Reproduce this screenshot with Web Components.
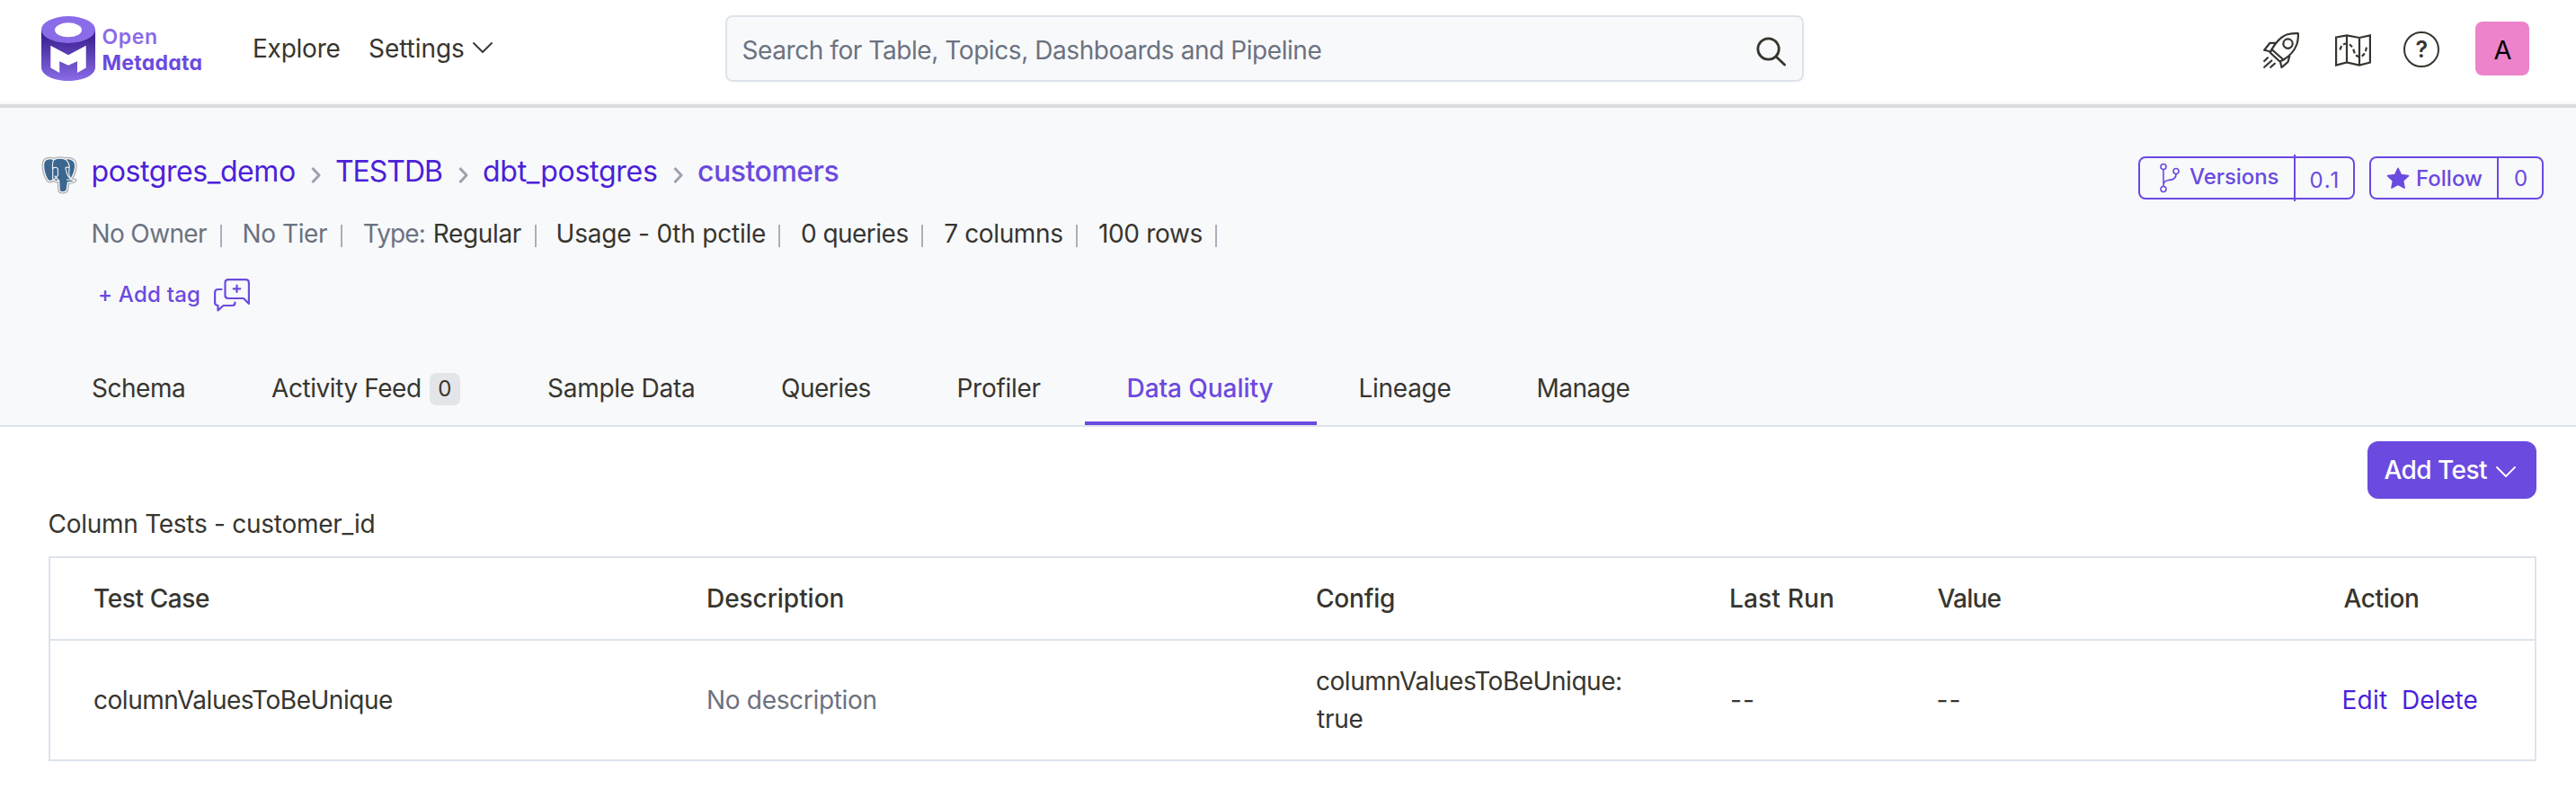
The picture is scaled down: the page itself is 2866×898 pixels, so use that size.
<!DOCTYPE html>
<html lang="en">
<head>
<meta charset="utf-8">
<title>OpenMetadata</title>
<style>
  html, body { margin: 0; background: #fff; }
  body {
    font-family: Inter, "Liberation Sans", sans-serif;
    font-size: 28px; line-height: 1; color: #37352f;
    --primary: #6b4adf; --link: #4c1fd9; --muted: #6b7280; --line: #dde3ec; --soft: #f8f9fb;
  }
</style>
</head>
<body>
<om-app></om-app>
<script>
const define = (name, html, setup) => {
  const tpl = document.createElement('template');
  tpl.innerHTML = html;
  customElements.define(name, class extends HTMLElement {
    connectedCallback() {
      if (this.shadowRoot) return;
      this.attachShadow({ mode: 'open' }).append(tpl.content.cloneNode(true));
      if (setup) setup.call(this, this.shadowRoot);
    }
  });
};

/* A single line of text whose tracking adapts to the width in its "w" attribute. */
const ctx = document.createElement('canvas').getContext('2d');
define('om-text', `
  <style>
    :host { display: block; flex: none; white-space: nowrap; line-height: 1; }
    span { display: block; }
  </style>
  <span><slot></slot></span>`, function (root) {
  const w = parseFloat(this.getAttribute('w'));
  const text = this.textContent;
  const cs = getComputedStyle(this);
  ctx.font = `${cs.fontWeight} ${cs.fontSize} ${cs.fontFamily}`;
  const m = ctx.measureText(text);
  const ink = m.actualBoundingBoxLeft + m.actualBoundingBoxRight;
  const span = root.querySelector('span');
  this.style.width = w + 'px';
  span.style.marginLeft = m.actualBoundingBoxLeft + 'px';
  if (text.length > 1) span.style.letterSpacing = ((w - ink) / (text.length - 1)).toFixed(3) + 'px';
});

define('om-chevron', `
  <style>:host { display: block; flex: none; } svg { display: block; }</style>
  <svg width="22" height="12" viewBox="0 0 22 12" fill="none" stroke="currentColor" stroke-width="1.8" stroke-linecap="round" stroke-linejoin="round"><path d="M1 1l10 10L21 1"/></svg>`);

define('om-logo', `
  <style>
    :host { display: flex; align-items: center; gap: 8.500px; width: 178px; flex: none; font-size: 23px; }
    svg { display: block; flex: none; }
    .words { display: flex; flex-direction: column; gap: 6px; font-feature-settings: "cv11"; margin-top: 3px; }
    .o { color: #8a6be8; font-weight: 600; } .m { color: var(--primary); font-weight: 700; }
  </style>
  <svg width="60" height="72" viewBox="0 0 60 72">
    <defs><linearGradient id="g" x1="0" y1="17" x2="0" y2="72" gradientUnits="userSpaceOnUse"><stop offset="0" stop-color="#351a8a"/><stop offset="1" stop-color="#8a6be8"/></linearGradient></defs>
    <path d="M0 15V57C0 65.500 13.500 72 30 72S60 65.500 60 57V15z" fill="url(#g)"/>
    <ellipse cx="30" cy="15" rx="30" ry="15" fill="#8a6be8"/>
    <ellipse cx="30" cy="15.300" rx="15" ry="8" fill="#fff"/>
    <path d="M10.300 32.700L30 43.300 49.700 32.700V57.500L40 63V50.300L30 54.700 20.200 50.300V63L10.300 57.500z" fill="#fff"/>
  </svg>
  <div class="words"><om-text class="o" w="59.500">Open</om-text><om-text class="m" w="106.500">Metadata</om-text></div>`);

define('om-search', `
  <style>
    :host { display: flex; box-sizing: border-box; width: 1200px; height: 74px; border: 2px solid var(--line); border-radius: 8px;
      background: var(--soft); align-items: center; justify-content: space-between; padding: 0 18px 0 17.500px; color: var(--muted); }
    om-text { margin-top: 4px; }
    svg { display: block; color: #37352f; margin-top: 6px; }
  </style>
  <om-text w="643">Search for Table, Topics, Dashboards and Pipeline</om-text>
  <svg width="33" height="33" viewBox="0 0 33 33" fill="none" stroke="currentColor" stroke-width="2.800" stroke-linecap="round"><circle cx="13.500" cy="13.500" r="11.700"/><path d="M22 22l9.500 9"/></svg>`);

define('om-avatar', `
  <style>:host { display: flex; width: 60px; height: 60px; border-radius: 8px; background: #ec83cb; color: #000; align-items: center; justify-content: center; font-size: 29px; } om-text { margin-top: 3px; }</style>
  <om-text w="19"></om-text>`, function (root) {
  const t = root.querySelector('om-text');
  const fresh = t.cloneNode();
  fresh.textContent = this.textContent;
  t.replaceWith(fresh);
});

define('om-header', `
  <style>
    :host { display: block; height: 116px; background: #fff; border-bottom: 4px solid #dadce0; box-shadow: inset 0 -5px 5px -4px rgba(60,50,40,.08); }
    .bar { display: flex; align-items: center; height: 108px; padding-left: 46px; }
    .explore { margin-left: 59px; } .settings { margin-left: 33.500px; }
    om-chevron { margin-left: 10px; margin-top: -2px; }
    om-search { margin-left: 259px; flex: none; }
    .icons { display: flex; align-items: center; margin-left: 511px; }
    svg { display: block; }
    .map { margin: 4px 36px 0 40px; } .rocket { margin-top: 4px; }
    .help { box-sizing: border-box; width: 40px; height: 40px; border: 2.500px solid #37352f; border-radius: 50%; display: flex; align-items: center; justify-content: center; font-size: 25px; font-weight: 600; margin: 2px 40px 0 0; }
  </style>
  <div class="bar">
    <om-logo></om-logo>
    <om-text class="explore" w="94.500">Explore</om-text>
    <om-text class="settings" w="105">Settings</om-text>
    <om-chevron></om-chevron>
    <om-search></om-search>
    <div class="icons">
      <svg class="rocket" width="40" height="40" viewBox="0 0 40 40" fill="none" stroke="#37352f" stroke-width="2.200" stroke-linejoin="round" stroke-linecap="round">
        <path d="M9.500 19C13 12 20 4.500 27 2.300Q33 .900 38.800 1.200Q39.300 7 37.500 13C35 20 30 26 22.500 30.500z"/>
        <circle cx="27.500" cy="12.600" r="5.200"/>
        <path d="M14 11.800H7.500L1.200 19.800L8.500 21.500M9.500 19L7.700 22.500L18.500 32.500L22.500 30.500M29.300 26.500L27.500 33L20.500 39L19 32.500M1.200 32L5 28.300M1.200 38.800L9.300 31.500M8.300 38.800L12.800 34.700"/>
      </svg>
      <svg class="map" width="40" height="36" viewBox="0 0 40 36" fill="none" stroke="#37352f" stroke-width="2.200">
        <path d="M1.100 3.500L13 1.400 27 4 38.900 1.400V31.500L27 34.500 13 31.500 1.100 34.500zM13 1.200V31.500M27 4V34.500"/>
        <path d="M5.500 17.500Q7 10.500 13 10.500Q18 11 20.500 17.500Q22.500 25 27 25Q33.500 25 35 14" stroke-dasharray="4.500 2.500"/>
      </svg>
      <div class="help"><om-text w="13">?</om-text></div>
      <om-avatar>A</om-avatar>
    </div>
  </div>`);

define('om-breadcrumb', `
  <style>
    :host { display: flex; align-items: center; font-size: 32px; color: var(--link); }
    svg { display: block; flex: none; }
    .pg { margin: 8px 17.500px 0 0; }
    .sep { margin: 8px 17px 0 18px; }
    .cur { color: var(--primary); font-weight: 500; }
  </style>
  <svg class="pg" width="40" height="42" viewBox="0 0 40 42" stroke-linejoin="round" stroke-linecap="round">
    <path d="M14 3.500C9 1.500 3 2.500 2.500 8.500C2.200 14 4 21 6.500 25.500C8 28 11 28 13 26C15 28 17.500 27.500 19.500 27L20 37.500C20.500 40.500 28 40.500 28.500 36.500L29.500 29C32.500 29.200 36 28.500 37.500 26.500C36.500 26.300 34 26.800 33 25.500C36 20 38.500 13 37.500 8C36.500 3 30.500 1.800 26.500 3C22 1.500 17.500 2 14 3.500z" fill="none" stroke="#a3a5a8" stroke-width="3.600"/>
    <path d="M14 3.500C9 1.500 3 2.500 2.500 8.500C2.200 14 4 21 6.500 25.500C8 28 11 28 13 26C15 28 17.500 27.500 19.500 27L20 37.500C20.500 40.500 28 40.500 28.500 36.500L29.500 29C32.500 29.200 36 28.500 37.500 26.500C36.500 26.300 34 26.800 33 25.500C36 20 38.500 13 37.500 8C36.500 3 30.500 1.800 26.500 3C22 1.500 17.500 2 14 3.500z" fill="#3b6690" stroke="#f1f2f3" stroke-width="1.500"/>
    <path d="M14 3.500C11.500 7 12.500 12 12.700 16C13 20 12 24 13 26C17 24 19 22 18.500 19C18 15.500 19.500 13 17 12.500Q14 12 12.700 13.500M15 22L19.500 27M26.500 3C30.500 6 31.500 11 31 15C30 19 31 22 33 25.500C31 27.500 30 25 28.500 26M31 13C29 11.500 26.500 12 27 13.500C28.500 17 27.500 22 33 25.500" fill="none" stroke="#eceef0" stroke-width="1.200"/>
  </svg>
  <om-text w="224.500">postgres_demo</om-text>
  <svg class="sep" width="11" height="18" viewBox="0 0 11 18" fill="none" stroke="#9ca3af" stroke-width="3" stroke-linejoin="round"><path d="M1.500 1l7.500 8-7.500 8"/></svg>
  <om-text w="118">TESTDB</om-text>
  <svg class="sep" width="11" height="18" viewBox="0 0 11 18" fill="none" stroke="#9ca3af" stroke-width="3" stroke-linejoin="round"><path d="M1.500 1l7.500 8-7.500 8"/></svg>
  <om-text w="193">dbt_postgres</om-text>
  <svg class="sep" width="11" height="18" viewBox="0 0 11 18" fill="none" stroke="#9ca3af" stroke-width="3" stroke-linejoin="round"><path d="M1.500 1l7.500 8-7.500 8"/></svg>
  <om-text class="cur" w="155.500">customers</om-text>`);

define('om-actions', `
  <style>
    :host { display: flex; gap: 16px; font-size: 24px; font-weight: 500; color: var(--primary); }
    .btn { display: flex; box-sizing: border-box; height: 48px; border: 2px solid currentColor; border-radius: 8px; align-items: center; }
    .btn i { width: 2px; background: currentColor; align-self: stretch; flex: none; }
    .btn i.tall { margin: -4px 0; }
    .v { width: 241px; } .f { width: 194px; }
    svg { display: block; flex: none; }
    .num { font-weight: 400; }
  </style>
  <div class="btn v">
    <svg style="margin-left:22px" width="22" height="34" viewBox="0 0 22 34" fill="none" stroke="currentColor" stroke-width="1.600"><circle cx="4" cy="4.500" r="3"/><circle cx="4" cy="29.500" r="3"/><circle cx="18" cy="9.500" r="3"/><path d="M4 7.500V26.500M18 12.500C18 19 13 19 9.500 19.500C6 20 4 21 4 25"/></svg>
    <om-text w="98.500" style="margin:-2px 17px 0 11px">Versions</om-text>
    <i class="tall"></i>
    <om-text class="num" w="30" style="margin:6px 0 0 17px">0.1</om-text>
  </div>
  <div class="btn f">
    <svg style="margin-left:17px" width="26" height="25" viewBox="0 0 26 25"><path d="M13 1.200l3.500 7.300 8 1.100-5.900 5.600 1.500 8L13 19.300l-7.100 3.900 1.500-8L1.500 9.600l8-1.100z" fill="currentColor" stroke="currentColor" stroke-width="1.500" stroke-linejoin="round"/></svg>
    <om-text w="73" style="margin:2px 16px 0 8px">Follow</om-text>
    <i></i>
    <om-text class="num" w="13" style="margin:2px 0 0 18px">0</om-text>
  </div>`);

define('om-facts', `
  <style>
    :host { display: flex; align-items: center; height: 40px; padding-left: 103.500px; }
    .g { color: var(--muted); }
    i { width: 2px; height: 25px; background: #a9b0bc; margin: 4px 23.800px 0 15px; flex: none; }
  </style>
  <om-text class="g" w="126.500">No Owner</om-text><i style="margin-right:24.500px"></i>
  <om-text class="g" w="92.500">No Tier</om-text><i></i>
  <om-text class="g" w="67">Type:</om-text><om-text w="96" style="margin-left:12px">Regular</om-text><i></i>
  <om-text w="230.500">Usage - 0th pctile</om-text><i></i>
  <om-text w="118.500">0 queries</om-text><i></i>
  <om-text w="131">7 columns</om-text><i></i>
  <om-text w="114.500">100 rows</om-text><i></i>`);

define('om-tags', `
  <style>
    :host { display: flex; align-items: center; height: 40px; padding-left: 111px; font-size: 24px; font-weight: 500; color: var(--primary); }
    svg { display: block; margin-left: 15.500px; }
  </style>
  <om-text w="111">+ Add tag</om-text>
  <svg width="40" height="37" viewBox="0 0 40 37" fill="none" stroke="currentColor" stroke-width="2.200" stroke-linejoin="round" stroke-linecap="round"><path d="M16 1.100H35.500Q38.900 1.100 38.900 4.500V28L33 22H16Q12.500 22 12.500 18.500V4.500Q12.500 1.100 16 1.100z"/><path d="M8.500 12H4.500Q1.100 12 1.100 15.500V27Q1.100 29.500 4.500 30V35.500L10.500 30H20.500Q23.500 30 23.500 26.500"/><path d="M25.500 7.500V15M21.700 11.300H29.300"/></svg>`);

define('om-tab', `
  <style>
    :host { display: flex; align-items: center; height: 82px; padding: 0 49px; box-sizing: border-box; flex: none; }
    :host([active]) { color: var(--primary); box-shadow: inset 0 -4px var(--primary); padding-right: 48px; font-weight: 500; }
    :host([badge]) { padding: 0 49px 0 48px; }
    .b { display: none; }
    :host([badge]) .b { display: flex; width: 34.500px; height: 36px; border-radius: 7px; background: #e4e5e9; margin: 2px 0 0 10.500px; align-items: center; justify-content: center; font-size: 24px; }
  </style>
  <om-text></om-text><span class="b"></span>`, function (root) {
  const t = root.querySelector('om-text');
  const fresh = t.cloneNode();
  fresh.setAttribute('w', this.getAttribute('w'));
  fresh.textContent = this.textContent;
  t.replaceWith(fresh);
  root.querySelector('.b').textContent = this.getAttribute('badge') || '';
});

define('om-entity', `
  <style>
    :host { display: block; background: var(--soft); border-bottom: 2px solid var(--line); }
    .top { display: flex; justify-content: space-between; align-items: center; height: 48px; padding: 54px 36px 0 46px; }
    om-breadcrumb { margin-top: -14px; }
    om-facts { margin-top: 18px; } om-tags { margin-top: 28px; }
    nav { display: flex; margin-top: 43px; padding-left: 54px; }
  </style>
  <div class="top"><om-breadcrumb></om-breadcrumb><om-actions></om-actions></div>
  <om-facts></om-facts>
  <om-tags></om-tags>
  <nav>
    <om-tab w="102">Schema</om-tab><om-tab w="165" badge="0">Activity Feed</om-tab><om-tab w="162">Sample Data</om-tab><om-tab w="98.500">Queries</om-tab><om-tab w="91">Profiler</om-tab><om-tab w="161" active>Data Quality</om-tab><om-tab w="100">Lineage</om-tab><om-tab w="101">Manage</om-tab>
  </nav>`);

define('om-table', `
  <style>
    :host { display: block; border: 2px solid var(--line); }
    .row { display: grid; grid-template-columns: 683px 677px 461px 229.500px 452px 1fr; align-items: center; padding-left: 49px; }
    .head { height: 90px; border-bottom: 2px solid var(--line); font-weight: 500; }
    .body { height: 132px; }
    .cfg { display: flex; flex-direction: column; gap: 14px; }
    .g { color: var(--muted); } .act { display: flex; gap: 18px; color: var(--link); }
  </style>
  <div class="row head">
    <om-text w="128">Test Case</om-text><om-text w="149.500">Description</om-text><om-text w="86">Config</om-text><om-text w="113">Last Run</om-text><om-text w="71">Value</om-text><om-text w="82.500">Action</om-text>
  </div>
  <div class="row body">
    <om-text w="331">columnValuesToBeUnique</om-text>
    <om-text class="g" w="186.500">No description</om-text>
    <div class="cfg"><om-text w="338">columnValuesToBeUnique:</om-text><om-text w="50.500">true</om-text></div>
    <om-text w="24">--</om-text><om-text w="24">--</om-text>
    <div class="act"><om-text w="48.500">Edit</om-text><om-text w="81.500">Delete</om-text></div>
  </div>`);

define('om-quality', `
  <style>
    :host { display: block; padding: 16px 44px 0 54px; }
    .add { display: flex; box-sizing: border-box; width: 188px; height: 64px; margin-left: auto; padding-left: 18.500px; align-items: center; background: var(--primary); color: #fff; border-radius: 12px; font-weight: 500; }
    .add om-chevron { margin: 4px 0 0 9.500px; }
    .title { margin: 14px 0 22px .500px; }
  </style>
  <div class="add"><om-text w="114.500">Add Test</om-text><om-chevron></om-chevron></div>
  <om-text class="title" w="361">Column Tests - customer_id</om-text>
  <om-table></om-table>`);

define('om-app', `
  <style>:host { display: block; }</style>
  <om-header></om-header><om-entity></om-entity><om-quality></om-quality>`);
</script>
</body>
</html>
